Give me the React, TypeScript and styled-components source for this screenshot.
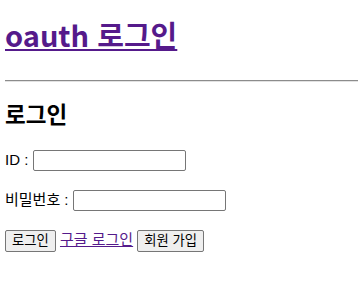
import React from 'react';
import styled, { createGlobalStyle } from 'styled-components';

const GlobalStyle = createGlobalStyle`
  body {
    margin: 0;
    padding-left: 5px;
    font-family: "Liberation Sans", "Noto Sans CJK KR", sans-serif;
    font-size: 15px;
    background: #fff;
    color: #000;
  }
`;

const Page = styled.div`
  font-family: "Liberation Sans", "Noto Sans CJK KR", sans-serif;
`;

const Title = styled.h1`
  font-family: "Noto Sans CJK KR", sans-serif;
  font-size: 29px;
  line-height: 36px;
  font-weight: 700;
  margin: 16px 0 28px;
`;

const VisitedLink = styled.a`
  color: #551a8b;
  text-decoration: underline;
  cursor: pointer;
`;

const Rule = styled.hr`
  margin: 0 1px 0 0;
  border: 0;
  border-top: 1px solid #8c8c8c;
  border-bottom: 1px solid #e2e2e2;
`;

const SubTitle = styled.h2`
  font-size: 22.5px;
  line-height: 26px;
  font-weight: 700;
  margin: 21px 0 21px;
`;

const Row = styled.p`
  font-size: 15px;
  line-height: 20px;
  margin: 19px 0;
`;

const TextInput = styled.input`
  box-sizing: border-box;
  font-family: "Liberation Sans", sans-serif;
  font-size: 13.33px;
  width: 153px;
  height: 21px;
  padding: 1px 2px;
  border: 1px solid #767676;
  border-radius: 2px;
  background: #fff;
`;

const Button = styled.button`
  font-family: "Liberation Sans", "Noto Sans CJK JP", sans-serif;
  font-size: 13.33px;
  line-height: 18px;
  padding: 1px 6px;
  background: #efefef;
  border: 1px solid #767676;
  border-radius: 2px;
  color: #000;
`;

export default function App() {
  return (
    <Page lang="ko">
      <GlobalStyle />
      <Title>
        <VisitedLink href="#">oauth 로그인</VisitedLink>
      </Title>
      <Rule />
      <SubTitle>로그인</SubTitle>
      <form onSubmit={(e) => e.preventDefault()}>
        <Row>
          ID : <TextInput type="text" />
        </Row>
        <Row>
          비밀번호 : <TextInput type="password" />
        </Row>
        <Row>
          <Button type="submit">로그인</Button> <VisitedLink href="#">구글 로그인</VisitedLink>{' '}
          <Button type="button">회원 가입</Button>
        </Row>
      </form>
    </Page>
  );
}
